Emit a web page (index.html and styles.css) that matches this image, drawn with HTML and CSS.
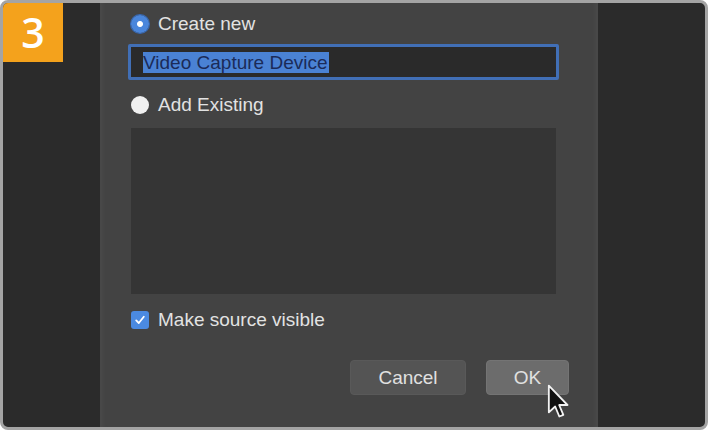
FILE: index.html
```html
<!DOCTYPE html>
<html lang="en">
<head>
  <meta charset="UTF-8">
  <title>Add Source</title>
  <link rel="stylesheet" href="styles.css">
</head>
<body>
  <div class="frame">
    <div class="step">3</div>

    <div class="panel">
      <label class="option">
        <span class="radio radio-on"></span>
        <span>Create new</span>
      </label>

      <div class="field">
        <span class="selected">Video Capture Device</span>
      </div>

      <label class="option option-add">
        <span class="radio radio-off"></span>
        <span>Add Existing</span>
      </label>

      <div class="list"></div>

      <label class="option option-check">
        <span class="check">
          <svg width="12" height="12" viewBox="0 0 12 12">
            <path d="M2.2 6.4 L4.8 9 L9.8 2.8" fill="none" stroke="#fff" stroke-width="1.8" stroke-linecap="round" stroke-linejoin="round"/>
          </svg>
        </span>
        <span>Make source visible</span>
      </label>

      <div class="buttons">
        <button class="btn btn-cancel">Cancel</button>
        <button class="btn btn-ok">OK</button>
      </div>

      <!-- mouse pointer over the OK button -->
      <svg class="pointer" width="22" height="35" viewBox="0 0 13 21">
        <polygon points="1,1 1,17 4.8,13.5 7.3,19.5 9.7,18.5 7.2,12.6 12.2,12.6" fill="#111" stroke="#f2f2f2" stroke-width="1.1" stroke-linejoin="round"/>
      </svg>
    </div>
  </div>
</body>
</html>
```

FILE: styles.css
```css
body {
  margin: 0;
  background: #ffffff;
  font-family: "Liberation Sans", Arial, sans-serif;
}
.frame {
  position: relative;
  width: 708px;
  height: 430px;
  box-sizing: border-box;
  border: 3px solid #a4a4a4;
  border-radius: 8px;
  background: #2b2b2b;
  overflow: hidden;
  display: flex;
}
.step {
  position: absolute;
  top: 0;
  left: 0;
  width: 60px;
  height: 59px;
  background: #f4a21c;
  color: #ffffff;
  font-family: "Open Sans", sans-serif;
  font-weight: 600;
  font-size: 41px;
  line-height: 59px;
  text-align: center;
}
.panel {
  position: relative;
  width: 498px;
  margin-left: 97px;
  box-sizing: border-box;
  padding: 12px 29px 0 31px;
  background: #434343;
  box-shadow: inset 6px 0 4px -3px #4a4a4a, inset -6px 0 4px -3px #4a4a4a;
  display: flex;
  flex-direction: column;
  color: #e2e2e2;
  font-size: 19px;
}
.option {
  display: flex;
  align-items: center;
  gap: 9px;
  height: 18px;
  line-height: 18px;
}
.radio {
  width: 18px;
  height: 18px;
  border-radius: 50%;
  box-sizing: border-box;
  flex-shrink: 0;
}
.radio-on {
  background: radial-gradient(circle, #ffffff 0 2.5px, #4a86dc 3.5px);
  box-shadow: 0 0 0 1px #3468b8;
}
.radio-off {
  background: #f0f0f0;
}
.field {
  margin: 11px 0 0 -3px;
  width: 431px;
  height: 36px;
  box-sizing: border-box;
  border: 3px solid #416fb6;
  border-radius: 2px;
  background: #2a2a2a;
  padding: 5px 0 0 12px;
}
.selected {
  display: inline-block;
  height: 21px;
  line-height: 21px;
  padding-right: 2px;
  background: #4a82d4;
  color: #1b2b58;
}
.option-add {
  margin-top: 16px;
}
.list {
  margin-top: 14px;
  width: 425px;
  height: 166px;
  background: #353535;
}
.option-check {
  margin-top: 17px;
}
.check {
  width: 18px;
  height: 18px;
  border-radius: 3px;
  background: #4b8ae0;
  display: flex;
  align-items: center;
  justify-content: center;
  flex-shrink: 0;
}
.buttons {
  margin-top: 31px;
  display: flex;
  justify-content: flex-end;
  align-items: center;
  gap: 20px;
}
.btn {
  height: 35px;
  border: 1px solid #5a5a5a;
  border-radius: 4px;
  font-family: "Liberation Sans", Arial, sans-serif;
  font-size: 19px;
  color: #e0e0e0;
  padding: 0;
}
.btn-cancel {
  width: 116px;
  background: #545454;
  border-color: #595959;
}
.btn-ok {
  width: 83px;
  background: #6c6c6c;
  border-color: #747474;
}
.pointer {
  position: absolute;
  left: 447px;
  top: 381px;
}
```
